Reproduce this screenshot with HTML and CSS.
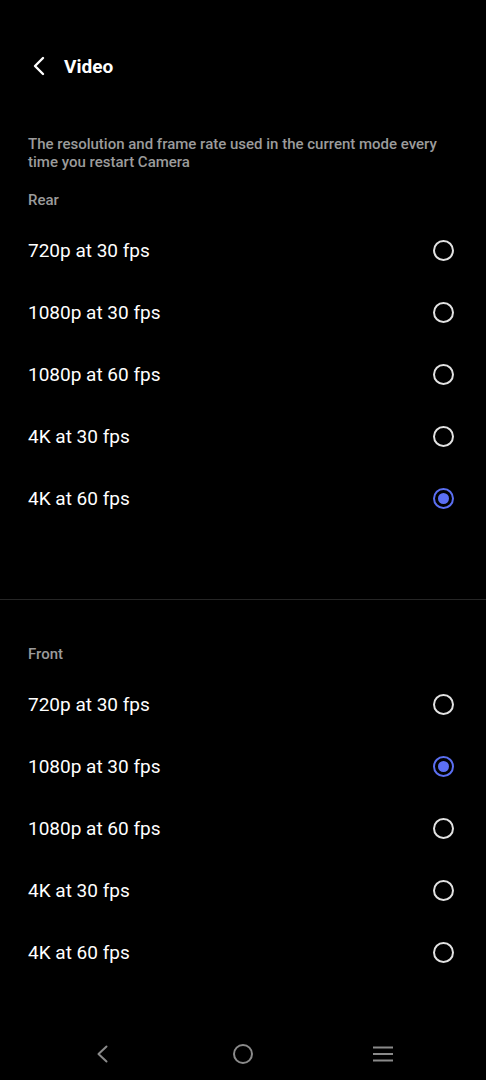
FILE: index.html
```html
<!DOCTYPE html>
<html lang="en">
<head>
    <meta charset="UTF-8">
    <meta name="viewport" content="width=device-width, initial-scale=1.0">
    <title>Video</title>
    <link rel="stylesheet" href="styles.css">
</head>
<body>

    <div class="header">
        <svg class="back" width="20" height="20" viewBox="0 0 20 20">
            <path d="M13 2 L5 10 L13 18" fill="none" stroke="#fff" stroke-width="2.4" stroke-linecap="round" stroke-linejoin="round"/>
        </svg>
        <span class="title">Video</span>
    </div>

    <p class="desc">The resolution and frame rate used in the current mode every time you restart Camera</p>

    <div class="label">Rear</div>
    <div class="list">
        <div class="row"><span>720p at 30 fps</span><span class="radio"></span></div>
        <div class="row"><span>1080p at 30 fps</span><span class="radio"></span></div>
        <div class="row"><span>1080p at 60 fps</span><span class="radio"></span></div>
        <div class="row"><span>4K at 30 fps</span><span class="radio"></span></div>
        <div class="row"><span>4K at 60 fps</span><span class="radio checked"></span></div>
    </div>

    <div class="divider"></div>

    <div class="label front">Front</div>
    <div class="list">
        <div class="row"><span>720p at 30 fps</span><span class="radio"></span></div>
        <div class="row"><span>1080p at 30 fps</span><span class="radio checked"></span></div>
        <div class="row"><span>1080p at 60 fps</span><span class="radio"></span></div>
        <div class="row"><span>4K at 30 fps</span><span class="radio"></span></div>
        <div class="row"><span>4K at 60 fps</span><span class="radio"></span></div>
    </div>

    <div class="navbar">
        <svg width="24" height="24" viewBox="0 0 24 24">
            <path d="M15.5 4.5 L7.5 12 L15.5 19.5" fill="none" stroke="#8a8a8a" stroke-width="2" stroke-linecap="round" stroke-linejoin="round"/>
        </svg>
        <svg width="24" height="24" viewBox="0 0 24 24">
            <circle cx="12" cy="12" r="9" fill="none" stroke="#8a8a8a" stroke-width="2"/>
        </svg>
        <svg width="24" height="24" viewBox="0 0 24 24">
            <path d="M2 5.5 H22 M2 12 H22 M2 18.5 H22" fill="none" stroke="#8a8a8a" stroke-width="2"/>
        </svg>
    </div>

</body>
</html>
```

FILE: styles.css
```css
body {
    margin: 0;
    background-color: #000;
    color: #fff;
    font-family: Roboto, 'Noto Sans', sans-serif;
}

.header {
    display: flex;
    align-items: center;
    height: 52px;
    margin-top: 40px;
    padding-left: 30px;
}

.back {
    margin-right: 14px;
}

.title {
    font-size: 19px;
    font-weight: bold;
}

.desc {
    margin: 43px 0 0;
    padding: 0 28px;
    font-size: 15px;
    font-weight: 500;
    line-height: 18px;
    color: #9b9b9b;
}

.label {
    margin-top: 20px;
    padding-left: 28px;
    font-size: 15px;
    font-weight: 500;
    line-height: 18px;
    color: #9b9b9b;
}

.label.front {
    margin-top: 45px;
}

.list {
    margin-top: 10px;
}

.row {
    display: flex;
    align-items: center;
    justify-content: space-between;
    height: 62px;
    padding: 0 32px 0 28px;
    font-size: 19px;
}

.radio {
    box-sizing: border-box;
    width: 21px;
    height: 21px;
    border: 2px solid #e2e2e2;
    border-radius: 50%;
    display: flex;
    align-items: center;
    justify-content: center;
}

.radio.checked {
    border-color: #5b6ff2;
}

.radio.checked::after {
    content: '';
    width: 11px;
    height: 11px;
    border-radius: 50%;
    background-color: #5b6ff2;
}

.divider {
    height: 1px;
    margin-top: 70px;
    background-color: #262626;
}

.navbar {
    display: flex;
    justify-content: center;
    align-items: center;
    gap: 116px;
    height: 50px;
    margin-top: 46px;
}
```
